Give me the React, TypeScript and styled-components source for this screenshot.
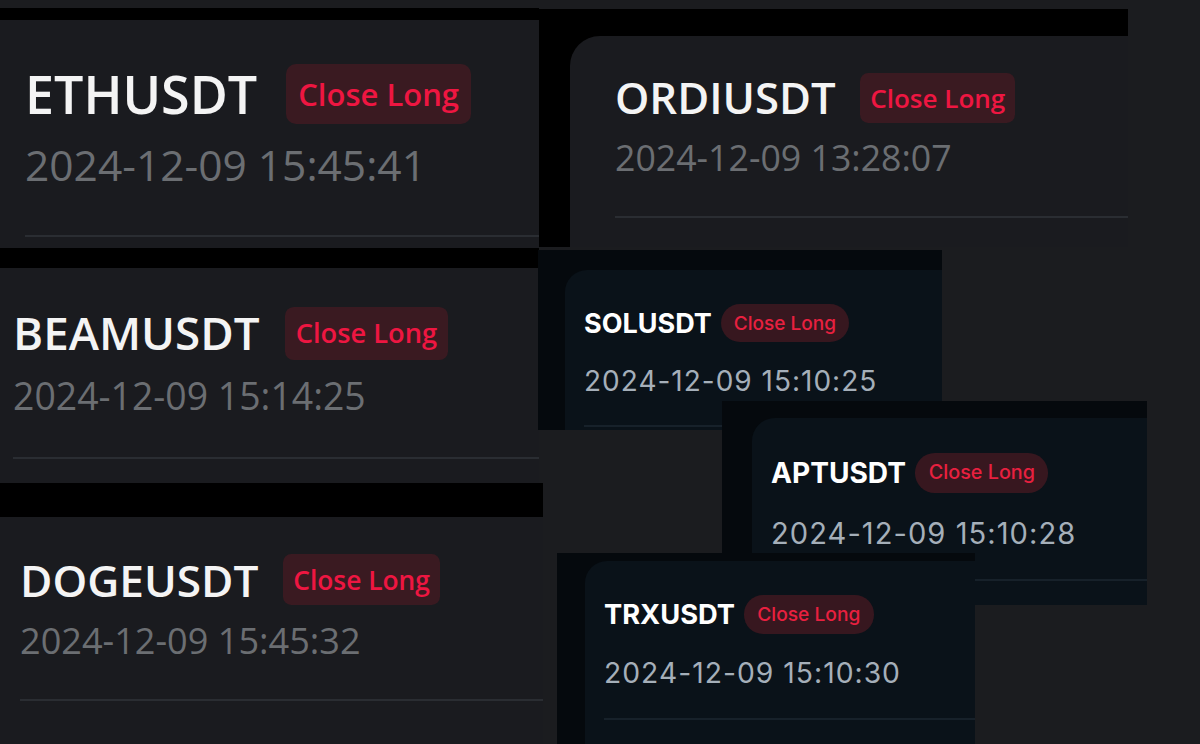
import styled, { createGlobalStyle } from "styled-components";

type Variant = "plex" | "navy";

const looks = {
  plex: {
    font: '"Open Sans", "Liberation Sans", sans-serif',
    frameBg: "#000000",
    cardBg: "#1a1b1f",
    padTop: 44,
    titleSize: 52,
    titleWeight: 600,
    titleColor: "#f4f4f4",
    gap: 29,
    badgeH: 60,
    badgeSize: 31,
    badgeWeight: 600,
    badgePad: 12,
    badgeRadius: 10,
    badgeBg: "#3a1a21",
    badgeColor: "#ee1641",
    dateSize: 42.5,
    dateSpacing: 0,
    dateWeight: 400,
    dateColor: "#6b6e72",
    dateGap: 20,
    dividerGap: 48,
    dividerH: 2,
    dividerColor: "#2a2d32",
  },
  navy: {
    font: 'Inter, "Noto Sans", sans-serif',
    frameBg: "#05090d",
    cardBg: "#0a1219",
    padTop: 34,
    titleSize: 27,
    titleWeight: 700,
    titleColor: "#ffffff",
    gap: 9,
    badgeH: 38,
    badgeSize: 19,
    badgeWeight: 500,
    badgePad: 13,
    badgeRadius: 19,
    badgeBg: "#37171f",
    badgeColor: "#e8203f",
    dateSize: 28,
    dateSpacing: 1,
    dateWeight: 400,
    dateColor: "#a5afb9",
    dateGap: 25,
    dividerGap: 30,
    dividerH: 2,
    dividerColor: "#17212a",
  },
};

type Look = { $v: Variant; $s: number };
const L = (p: Look) => looks[p.$v];
const px = (p: Look, n: number) => `${n * p.$s}px`;

const GlobalStyle = createGlobalStyle`
  html, body {
    margin: 0;
    padding: 0;
    background: #1b1c1f;
  }
  body {
    font-family: "Open Sans", "Liberation Sans", sans-serif;
  }
`;

const Canvas = styled.div`
  position: relative;
  width: 1200px;
  height: 744px;
  overflow: hidden;
  background: #1b1c1f;
`;

// each screenshot sits on the canvas like a window: its place is the content
const Shot = styled.div<{
  $v: Variant;
  $x: number;
  $y: number;
  $w: number;
  $h: number;
  $insetTop: number;
  $insetLeft: number;
}>`
  position: absolute;
  left: ${(p) => p.$x}px;
  top: ${(p) => p.$y}px;
  width: ${(p) => p.$w}px;
  height: ${(p) => p.$h}px;
  box-sizing: border-box;
  overflow: hidden;
  display: flex;
  flex-direction: column;
  padding: ${(p) => p.$insetTop}px 0 0 ${(p) => p.$insetLeft}px;
  background: ${(p) => looks[p.$v].frameBg};
`;

const Card = styled.div<Look & { $radius: number; $padLeft: number }>`
  flex: 1;
  min-width: 0;
  display: flex;
  flex-direction: column;
  padding: ${(p) => px(p, L(p).padTop)} 0 0 ${(p) => p.$padLeft}px;
  background: ${(p) => L(p).cardBg};
  border-top-left-radius: ${(p) => p.$radius}px;
  font-family: ${(p) => L(p).font};
`;

const TitleRow = styled.div<Look>`
  display: flex;
  align-items: center;
  gap: ${(p) => px(p, L(p).gap)};
  white-space: nowrap;
`;

const Symbol = styled.span<Look>`
  font-size: ${(p) => px(p, L(p).titleSize)};
  font-weight: ${(p) => L(p).titleWeight};
  line-height: 1;
  color: ${(p) => L(p).titleColor};
`;

const Badge = styled.span<Look>`
  display: inline-flex;
  align-items: center;
  height: ${(p) => px(p, L(p).badgeH)};
  padding: 0 ${(p) => px(p, L(p).badgePad)};
  border-radius: ${(p) => px(p, L(p).badgeRadius)};
  background: ${(p) => L(p).badgeBg};
  color: ${(p) => L(p).badgeColor};
  font-size: ${(p) => px(p, L(p).badgeSize)};
  font-weight: ${(p) => L(p).badgeWeight};
  line-height: 1;
`;

const Time = styled.div<Look>`
  margin-top: ${(p) => px(p, L(p).dateGap)};
  font-size: ${(p) => px(p, L(p).dateSize)};
  font-weight: ${(p) => L(p).dateWeight};
  letter-spacing: ${(p) => px(p, L(p).dateSpacing)};
  line-height: 1;
  color: ${(p) => L(p).dateColor};
  white-space: nowrap;
`;

const Divider = styled.div<Look>`
  margin-top: ${(p) => px(p, L(p).dividerGap)};
  height: ${(p) => L(p).dividerH}px;
  background: ${(p) => L(p).dividerColor};
  flex-shrink: 0;
`;

type Order = {
  symbol: string;
  time: string;
  v: Variant;
  s: number;
  x: number;
  y: number;
  w: number;
  h: number;
  insetTop: number;
  insetLeft: number;
  radius: number;
  padLeft: number;
};

const orders: Order[] = [
  { symbol: "ETHUSDT", time: "2024-12-09 15:45:41", v: "plex", s: 1, x: 0, y: 8, w: 539, h: 240, insetTop: 12, insetLeft: 0, radius: 0, padLeft: 25 },
  { symbol: "ORDIUSDT", time: "2024-12-09 13:28:07", v: "plex", s: 0.84, x: 539, y: 9, w: 589, h: 238, insetTop: 27, insetLeft: 31, radius: 30, padLeft: 45 },
  { symbol: "BEAMUSDT", time: "2024-12-09 15:14:25", v: "plex", s: 0.88, x: 0, y: 248, w: 539, h: 235, insetTop: 20, insetLeft: 0, radius: 0, padLeft: 13 },
  { symbol: "DOGEUSDT", time: "2024-12-09 15:45:32", v: "plex", s: 0.85, x: 0, y: 483, w: 543, h: 261, insetTop: 34, insetLeft: 0, radius: 0, padLeft: 20 },
  { symbol: "SOLUSDT", time: "2024-12-09 15:10:25", v: "navy", s: 1, x: 538, y: 250, w: 404, h: 180, insetTop: 20, insetLeft: 27, radius: 22, padLeft: 19 },
  { symbol: "APTUSDT", time: "2024-12-09 15:10:28", v: "navy", s: 1.04, x: 722, y: 401, w: 425, h: 204, insetTop: 17, insetLeft: 30, radius: 23, padLeft: 19 },
  { symbol: "TRXUSDT", time: "2024-12-09 15:10:30", v: "navy", s: 1.01, x: 557, y: 553, w: 418, h: 191, insetTop: 8, insetLeft: 28, radius: 22, padLeft: 19 },
];

const App = () => {
  return (
    <>
      <GlobalStyle />
      <Canvas>
        {orders.map((o) => (
          <Shot
            key={o.symbol}
            $v={o.v}
            $x={o.x}
            $y={o.y}
            $w={o.w}
            $h={o.h}
            $insetTop={o.insetTop}
            $insetLeft={o.insetLeft}
          >
            <Card $v={o.v} $s={o.s} $radius={o.radius} $padLeft={o.padLeft}>
              <TitleRow $v={o.v} $s={o.s}>
                <Symbol $v={o.v} $s={o.s}>{o.symbol}</Symbol>
                <Badge $v={o.v} $s={o.s}>Close Long</Badge>
              </TitleRow>
              <Time $v={o.v} $s={o.s}>{o.time}</Time>
              <Divider $v={o.v} $s={o.s} />
            </Card>
          </Shot>
        ))}
      </Canvas>
    </>
  );
};

export default App;
